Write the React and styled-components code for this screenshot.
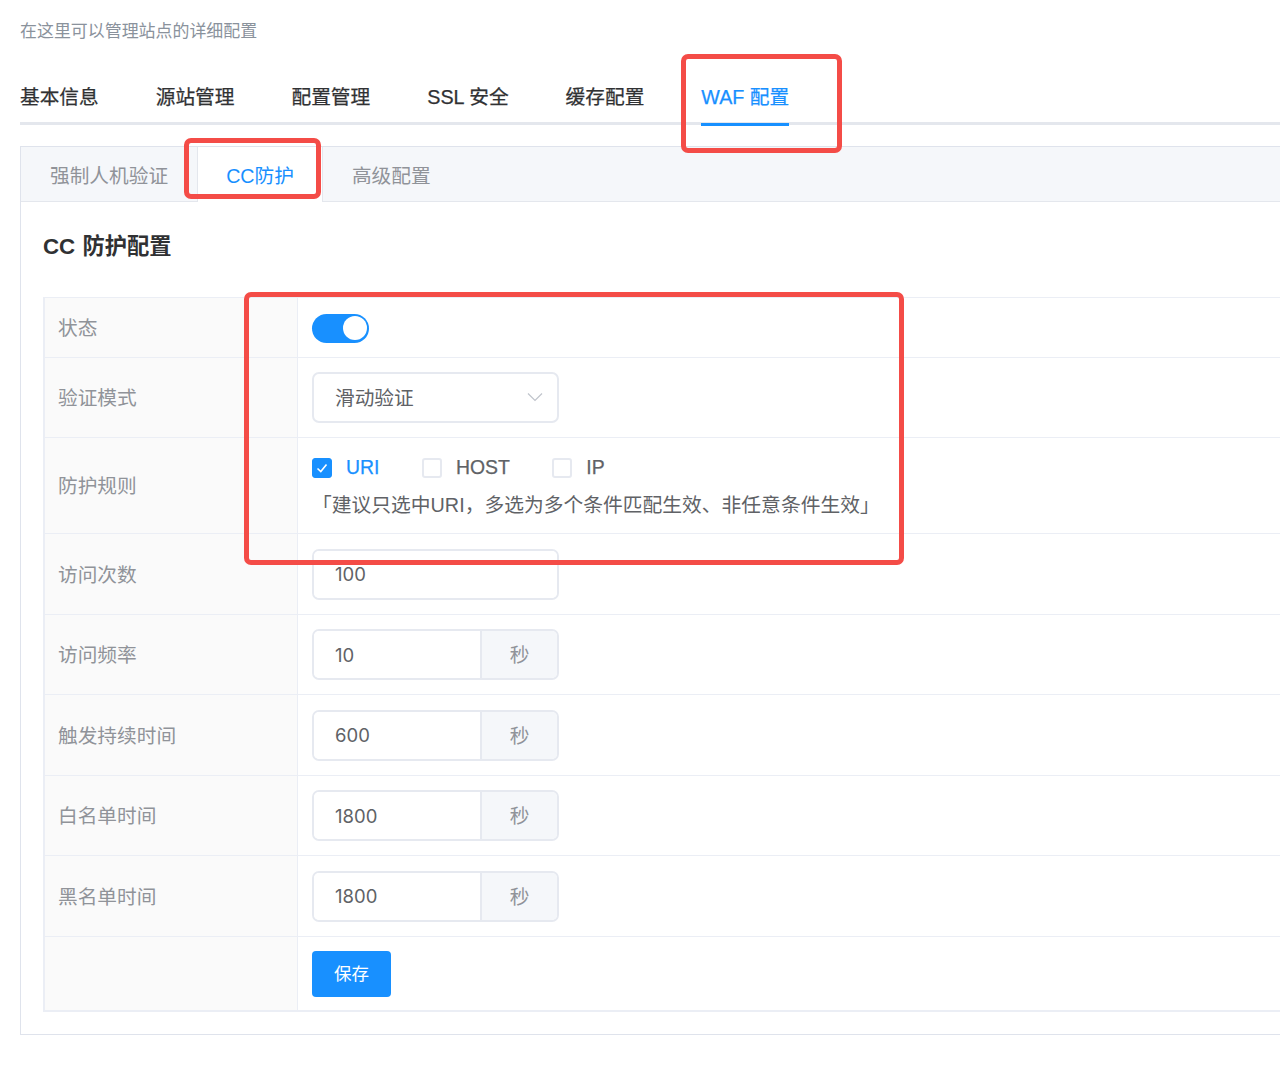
import React from "react";
import styled, { createGlobalStyle } from "styled-components";

const Global = createGlobalStyle`
  html, body { margin: 0; padding: 0; background: #fff; }
  body { font-family: "Liberation Sans", "Noto Sans CJK SC", sans-serif; }
  * { box-sizing: border-box; }
`;

const Page = styled.div`
  position: relative;
  width: 1280px;
  height: 1069px;
  overflow: hidden;
  padding: 22px 0 0 20px;
`;
const Subtitle = styled.div`
  font-size: 16.95px;
  line-height: 20px;
  color: #8a929c;
  height: 20px;
`;
const MainTabs = styled.div`
  display: flex;
  gap: 57px;
  width: 1300px;
  height: 65px;
  margin-top: 18px;
  padding-top: 1px;
  border-bottom: 3px solid #e4e7ed;
`;
const MainTab = styled.div`
  height: 65px;
  padding-top: 21px;
  line-height: 30px;
  font-size: 19.7px;
  -webkit-text-stroke: 0.25px currentColor;
  color: ${(p) => (p.$active ? "#1890ff" : "#303133")};
  border-bottom: ${(p) => (p.$active ? "3px solid #1890ff" : "none")};
`;
const Panel = styled.div`
  margin-top: 21px;
  width: 1300px;
  height: 889px;
  border: 1px solid #dfe3ec;
`;
const SubTabs = styled.div`
  display: flex;
  height: 55px;
  background: #f5f7fa;
  border-bottom: 1px solid #e4e7ed;
`;
const SubTab = styled.div`
  height: ${(p) => (p.$active ? "55px" : "54px")};
  padding: 0 28px;
  line-height: 58px;
  font-size: 19.7px;
  color: ${(p) => (p.$active ? "#1890ff" : "#909399")};
  background: ${(p) => (p.$active ? "#fff" : "transparent")};
  border-left: 1px solid ${(p) => (p.$active ? "#e4e7ed" : "transparent")};
  border-right: 1px solid ${(p) => (p.$active ? "#e4e7ed" : "transparent")};
`;
const Body = styled.div`
  padding: 0 0 0 22px;
`;
const Title = styled.h3`
  margin: 0;
  height: 95px;
  padding-top: 30px;
  font-size: 22.3px;
  line-height: 30px;
  font-weight: 700;
  word-spacing: 1px;
  color: #303133;
`;
const Table = styled.div`
  width: 1280px;
  border-top: 1px solid #ebeef5;
  border-left: 2px solid #ebeef5;
`;
const Row = styled.div`
  display: grid;
  grid-template-columns: 253px 1fr;
  height: ${(p) => p.$h}px;
  border-bottom: ${(p) => (p.$last ? "2px" : "1px")} solid #ebeef5;
`;
const Label = styled.div`
  display: flex;
  align-items: center;
  padding: 0 0 2px 13px;
  background: #fafafa;
  border-right: 1px solid #ebeef5;
  font-size: 19.7px;
  color: #909399;
`;
const Value = styled.div`
  display: flex;
  flex-direction: column;
  justify-content: center;
  align-items: flex-start;
  padding-left: 14px;
`;
const Toggle = styled.div`
  display: flex;
  justify-content: flex-end;
  align-items: center;
  width: 57px;
  height: 29px;
  margin-top: 1px;
  padding-right: 2px;
  border-radius: 15px;
  background: #1890ff;
`;
const Knob = styled.span`
  width: 24px;
  height: 24px;
  border-radius: 50%;
  background: #fff;
`;
const Select = styled.div`
  display: flex;
  align-items: center;
  justify-content: space-between;
  width: 247px;
  height: 51px;
  padding: 0 14px 2px 21px;
  border: 2px solid #e6e9f0;
  border-radius: 7px;
  font-size: 19.7px;
  color: #606266;
`;
const Chevron = styled.svg`
  width: 16px;
  height: 10px;
  fill: none;
  stroke: #c0c4cc;
  stroke-width: 1.2;
`;
const Checks = styled.div`
  display: flex;
  align-items: center;
  height: 30px;
  margin-top: 1px;
`;
const Check = styled.label`
  display: flex;
  align-items: center;
  margin-right: 42.5px;
  font-size: 19.4px;
  -webkit-text-stroke: 0.25px currentColor;
  color: ${(p) => (p.$on ? "#1890ff" : "#606266")};
`;
const Box = styled.span`
  display: flex;
  align-items: center;
  justify-content: center;
  width: 20px;
  height: 20px;
  margin-right: 14px;
  border-radius: 3px;
  border: ${(p) => (p.$on ? "1px solid #1890ff" : "2px solid #e6e9f0")};
  background: ${(p) => (p.$on ? "#1890ff" : "#fff")};
`;
const Tick = styled.svg`
  width: 14px;
  height: 14px;
  fill: none;
  stroke: #fff;
  stroke-width: 1.6;
`;
const Note = styled.div`
  margin-top: 7px;
  height: 30px;
  line-height: 30px;
  font-size: 19.77px;
  color: #606266;
  white-space: nowrap;
`;
const Group = styled.div`
  display: flex;
  width: 247px;
  height: 51px;
  border: 2px solid #e6e9f0;
  border-radius: 7px;
  overflow: hidden;
`;
const Field = styled.input`
  flex: 1;
  min-width: 0;
  border: 0;
  outline: 0;
  padding: 0 0 0 21px;
  background: #fff;
  font: 18.5px "Inter", sans-serif;
  color: #606266;
`;
const Addon = styled.div`
  display: flex;
  align-items: center;
  justify-content: center;
  width: 77px;
  padding-bottom: 2px;
  background: #f5f7fa;
  border-left: 2px solid #e6e9f0;
  font-size: 19.7px;
  color: #909399;
`;
const Save = styled.button`
  width: 79px;
  height: 46px;
  padding: 0 0 2px;
  border: 0;
  border-radius: 4px;
  background: #1890ff;
  color: #fff;
  font: 17.5px "Liberation Sans", "Noto Sans CJK SC", sans-serif;
`;
const Mark = styled.div`
  position: absolute;
  left: ${(p) => p.$x}px;
  top: ${(p) => p.$y}px;
  width: ${(p) => p.$w}px;
  height: ${(p) => p.$h}px;
  border: 5px solid #f44c47;
  border-radius: 7px;
  pointer-events: none;
`;

const tabs = ["基本信息", "源站管理", "配置管理", "SSL 安全", "缓存配置", "WAF 配置"];
const subs = ["强制人机验证", "CC防护", "高级配置"];
const timed = [
  ["访问频率", "10", 80],
  ["触发持续时间", "600", 81],
  ["白名单时间", "1800", 80],
  ["黑名单时间", "1800", 81],
];

export default function App() {
  return (
    <Page>
      <Global />
      <Subtitle>在这里可以管理站点的详细配置</Subtitle>
      <MainTabs>
        {tabs.map((t, i) => (
          <MainTab key={t} $active={i === 5}>{t}</MainTab>
        ))}
      </MainTabs>
      <Panel>
        <SubTabs>
          {subs.map((t, i) => (
            <SubTab key={t} $active={i === 1}>{t}</SubTab>
          ))}
        </SubTabs>
        <Body>
          <Title>CC 防护配置</Title>
          <Table>
            <Row $h={60}>
              <Label>状态</Label>
              <Value><Toggle><Knob /></Toggle></Value>
            </Row>
            <Row $h={80}>
              <Label>验证模式</Label>
              <Value>
                <Select>
                  滑动验证
                  <Chevron viewBox="0 0 16 10"><polyline points="1,1.5 8,8.5 15,1.5" /></Chevron>
                </Select>
              </Value>
            </Row>
            <Row $h={96}>
              <Label>防护规则</Label>
              <Value>
                <Checks>
                  <Check $on>
                    <Box $on>
                      <Tick viewBox="0 0 14 14"><polyline points="2.5,7.5 5.8,10.5 11.5,3.5" /></Tick>
                    </Box>
                    URI
                  </Check>
                  <Check>
                    <Box />
                    HOST
                  </Check>
                  <Check>
                    <Box />
                    IP
                  </Check>
                </Checks>
                <Note>「建议只选中URI，多选为多个条件匹配生效、非任意条件生效」</Note>
              </Value>
            </Row>
            <Row $h={81}>
              <Label>访问次数</Label>
              <Value>
                <Group><Field readOnly defaultValue="100" /></Group>
              </Value>
            </Row>
            {timed.map(([label, val, h]) => (
              <Row key={label} $h={h}>
                <Label>{label}</Label>
                <Value>
                  <Group>
                    <Field readOnly defaultValue={val} />
                    <Addon>秒</Addon>
                  </Group>
                </Value>
              </Row>
            ))}
            <Row $h={75} $last>
              <Label />
              <Value><Save>保存</Save></Value>
            </Row>
          </Table>
        </Body>
      </Panel>
      <Mark $x={681} $y={54} $w={161} $h={99} />
      <Mark $x={184} $y={138} $w={137} $h={61} />
      <Mark $x={244} $y={292} $w={660} $h={273} />
    </Page>
  );
}
